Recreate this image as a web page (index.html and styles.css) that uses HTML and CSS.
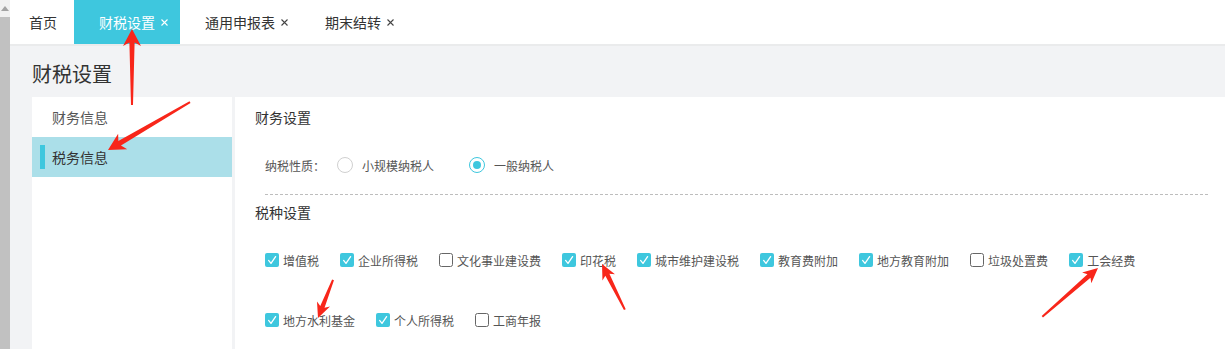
FILE: index.html
```html
<!DOCTYPE html>
<html lang="zh-CN">
<head>
<meta charset="utf-8">
<title>财税设置</title>
<link rel="stylesheet" href="styles.css">
</head>
<body>
<div class="page">
  <div class="scrollbar">
    <div class="scroll-btn">
      <svg width="8" height="5" viewBox="0 0 8 5"><polygon points="4,0 8,5 0,5" fill="#a3a3a3"/></svg>
    </div>
    <div class="scroll-thumb"></div>
  </div>
  <div class="main">
    <div class="tabbar">
      <div class="tab home">首页</div>
      <div class="tab active">财税设置<svg class="tab-close" viewBox="0 0 7 7"><path d="M0.5 0.5L6.5 6.5M6.5 0.5L0.5 6.5"/></svg></div>
      <div class="tab">通用申报表<svg class="tab-close" viewBox="0 0 7 7"><path d="M0.5 0.5L6.5 6.5M6.5 0.5L0.5 6.5"/></svg></div>
      <div class="tab">期末结转<svg class="tab-close" viewBox="0 0 7 7"><path d="M0.5 0.5L6.5 6.5M6.5 0.5L0.5 6.5"/></svg></div>
    </div>
    <div class="page-title">财税设置</div>
    <div class="content">
      <div class="sidebar">
        <div class="side-item">财务信息</div>
        <div class="side-item active"><span class="side-bar"></span>税务信息</div>
      </div>
      <div class="panel">
        <div class="section-title">财务设置</div>
        <div class="radio-row">
          <span class="field-label">纳税性质：</span>
          <span class="radio-opt"><span class="radio"></span>小规模纳税人</span>
          <span class="radio-opt"><span class="radio checked"><span class="dot"></span></span>一般纳税人</span>
        </div>
        <div class="dashed"></div>
        <div class="section-title short">税种设置</div>
        <div class="checks">
          <label class="chk"><svg class="box" viewBox="0 0 14 14"><rect class="on" x="0" y="0" width="14" height="14" rx="2"/><polyline class="tick" points="3.6,7.4 6,10.4 10.6,3.6"/></svg>增值税</label>
          <label class="chk"><svg class="box" viewBox="0 0 14 14"><rect class="on" x="0" y="0" width="14" height="14" rx="2"/><polyline class="tick" points="3.6,7.4 6,10.4 10.6,3.6"/></svg>企业所得税</label>
          <label class="chk"><svg class="box" viewBox="0 0 14 14"><rect class="off" x="0.5" y="0.5" width="13" height="13" rx="2"/></svg>文化事业建设费</label>
          <label class="chk"><svg class="box" viewBox="0 0 14 14"><rect class="on" x="0" y="0" width="14" height="14" rx="2"/><polyline class="tick" points="3.6,7.4 6,10.4 10.6,3.6"/></svg>印花税</label>
          <label class="chk"><svg class="box" viewBox="0 0 14 14"><rect class="on" x="0" y="0" width="14" height="14" rx="2"/><polyline class="tick" points="3.6,7.4 6,10.4 10.6,3.6"/></svg>城市维护建设税</label>
          <label class="chk"><svg class="box" viewBox="0 0 14 14"><rect class="on" x="0" y="0" width="14" height="14" rx="2"/><polyline class="tick" points="3.6,7.4 6,10.4 10.6,3.6"/></svg>教育费附加</label>
          <label class="chk"><svg class="box" viewBox="0 0 14 14"><rect class="on" x="0" y="0" width="14" height="14" rx="2"/><polyline class="tick" points="3.6,7.4 6,10.4 10.6,3.6"/></svg>地方教育附加</label>
          <label class="chk"><svg class="box" viewBox="0 0 14 14"><rect class="off" x="0.5" y="0.5" width="13" height="13" rx="2"/></svg>垃圾处置费</label>
          <label class="chk"><svg class="box" viewBox="0 0 14 14"><rect class="on" x="0" y="0" width="14" height="14" rx="2"/><polyline class="tick" points="3.6,7.4 6,10.4 10.6,3.6"/></svg>工会经费</label>
          <label class="chk"><svg class="box" viewBox="0 0 14 14"><rect class="on" x="0" y="0" width="14" height="14" rx="2"/><polyline class="tick" points="3.6,7.4 6,10.4 10.6,3.6"/></svg>地方水利基金</label>
          <label class="chk"><svg class="box" viewBox="0 0 14 14"><rect class="on" x="0" y="0" width="14" height="14" rx="2"/><polyline class="tick" points="3.6,7.4 6,10.4 10.6,3.6"/></svg>个人所得税</label>
          <label class="chk"><svg class="box" viewBox="0 0 14 14"><rect class="off" x="0.5" y="0.5" width="13" height="13" rx="2"/></svg>工商年报</label>
        </div>
      </div>
    </div>
  </div>
</div>
<svg class="arrows" width="1225" height="349" viewBox="0 0 1225 349">
  <g transform="translate(132,29)"><polygon points="0,0 9,17 2.6,13.5 1,76 -1,76 -2.6,13.5 -9,17"/></g>
  <g transform="translate(108,150) rotate(-120.3)"><polygon points="0,0 9,17 2.6,13.5 1,95 -1,95 -2.6,13.5 -9,17"/></g>
  <g transform="translate(602,264) rotate(-26.6)"><polygon points="0,0 7,15 2.3,12 1,51 -1,51 -2.3,12 -7,15"/></g>
  <g transform="translate(318,318) rotate(-158.5)"><polygon points="0,0 7,15 2.3,12 1,41 -1,41 -2.3,12 -7,15"/></g>
  <g transform="translate(1098,268) rotate(48.8)"><polygon points="0,0 7,15 2.3,12 1,74 -1,74 -2.3,12 -7,15"/></g>
</svg>
</body>
</html>
```

FILE: styles.css
```css
html, body {
  margin: 0;
  padding: 0;
}
body {
  width: 1225px;
  height: 349px;
  overflow: hidden;
  position: relative;
  font-family: "Noto Sans CJK SC", "Noto Sans", sans-serif;
  color: #333;
}
.page {
  display: flex;
  height: 349px;
}
.scrollbar {
  width: 10px;
  flex: none;
  display: flex;
  flex-direction: column;
  background: #c1c1c1;
}
.scroll-btn {
  height: 17px;
  background: #f1f1f1;
  display: flex;
  align-items: center;
  justify-content: center;
}
.scroll-btn svg {
  display: block;
}
.scroll-thumb {
  flex: 1;
  background: #c1c1c1;
}
.main {
  flex: 1;
  min-width: 0;
  display: flex;
  flex-direction: column;
  background: #f2f3f5;
}
.tabbar {
  height: 44px;
  flex: none;
  display: flex;
  background: #fff;
  border-bottom: 2px solid #eaebec;
}
.tab {
  display: flex;
  align-items: center;
  padding: 0 12px 0 25px;
  font-size: 14px;
  color: #333;
  white-space: nowrap;
}
.tab.home {
  padding: 0 17px 0 19px;
}
.tab.active {
  background: #3ec7de;
  color: #fff;
}
.tab-close {
  width: 7px;
  height: 7px;
  margin-left: 6px;
  margin-top: 1px;
  fill: none;
  stroke: #444;
  stroke-width: 1.1;
}
.tab.active .tab-close {
  stroke: #fff;
}
.page-title {
  height: 48px;
  padding: 3px 0 0 22px;
  display: flex;
  align-items: center;
  font-size: 20px;
  color: #333;
  flex: none;
}
.content {
  flex: 1;
  display: flex;
  gap: 3px;
  padding-left: 22px;
  min-height: 0;
}
.sidebar {
  width: 200px;
  flex: none;
  background: #fff;
}
.side-item {
  height: 40px;
  display: flex;
  align-items: center;
  padding-left: 20px;
  font-size: 14px;
  color: #555;
}
.side-item.active {
  padding-left: 8px;
  background: #abdfe9;
  color: #333;
}
.side-bar {
  width: 5px;
  height: 24px;
  background: #3ec7de;
  margin-right: 7px;
}
.panel {
  flex: 1;
  background: #fff;
  padding: 0 17px 0 20px;
}
.section-title {
  height: 40px;
  line-height: 40px;
  font-size: 14px;
  color: #333;
}
.section-title.short {
  height: 35px;
  line-height: 35px;
}
.radio-row {
  height: 40px;
  margin-top: 8px;
  padding-left: 10px;
  display: flex;
  align-items: center;
  font-size: 12px;
  color: #555;
}
.field-label {
  margin-right: 12px;
}
.radio-opt {
  display: flex;
  align-items: center;
  margin-right: 35px;
}
.radio {
  width: 14px;
  height: 14px;
  border: 1px solid #d0d0d0;
  border-radius: 50%;
  margin-right: 9px;
  display: flex;
  align-items: center;
  justify-content: center;
  background: #fff;
}
.radio.checked {
  border-color: #3ec7de;
}
.dot {
  width: 8px;
  height: 8px;
  border-radius: 50%;
  background: #3ec7de;
}
.dashed {
  margin: 9px 0 0 10px;
  border-top: 1px dashed #bdbdbd;
}
.checks {
  display: flex;
  flex-wrap: wrap;
  padding-left: 10px;
}
.chk {
  height: 60px;
  display: flex;
  align-items: center;
  margin-right: 21px;
  font-size: 12px;
  color: #555;
}
.box {
  width: 14px;
  height: 14px;
  margin-right: 4px;
  display: block;
}
.box .on {
  fill: #3ec7de;
}
.box .off {
  fill: #fff;
  stroke: #666;
  stroke-width: 1;
}
.box .tick {
  fill: none;
  stroke: #fff;
  stroke-width: 1.3;
  stroke-linecap: round;
  stroke-linejoin: round;
}
.arrows {
  position: absolute;
  left: 0;
  top: 0;
  pointer-events: none;
}
.arrows polygon {
  fill: #f8261a;
}
```
